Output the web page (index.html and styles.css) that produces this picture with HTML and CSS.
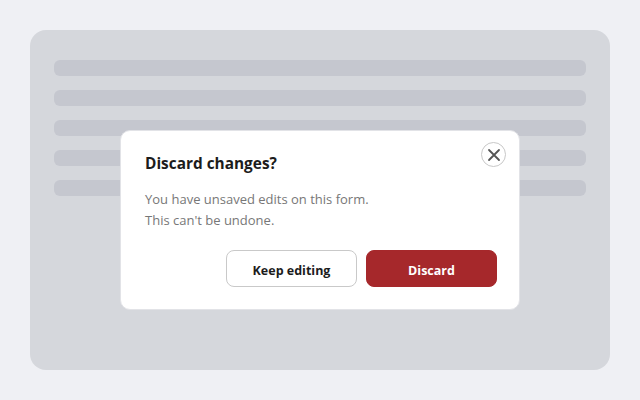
FILE: index.html
```html
<!DOCTYPE html>
<html>
<head>
<meta charset="utf-8">
<link rel="stylesheet" href="styles.css">
</head>
<body>
<div class="stage">
  <div class="panel">
    <div class="bar"></div>
    <div class="bar"></div>
    <div class="bar"></div>
    <div class="bar"></div>
    <div class="bar"></div>
  </div>
  <div class="dialog" role="dialog">
    <button class="close" aria-label="Close">
      <svg width="14" height="14" viewBox="0 0 14 14"><path d="M2 2L12 12M12 2L2 12" stroke="#555" stroke-width="1.8" stroke-linecap="round"/></svg>
    </button>
    <h2 class="title">Discard changes?</h2>
    <p class="body">You have unsaved edits on this form.<br>This can't be undone.</p>
    <div class="actions">
      <button class="btn btn-secondary">Keep editing</button>
      <button class="btn btn-danger">Discard</button>
    </div>
  </div>
</div>
</body>
</html>
```
FILE: styles.css
```css
html, body {
  margin: 0;
  padding: 0;
  background: #eff0f4;
  font-family: "Open Sans", "Noto Sans", sans-serif;
}
.stage {
  position: relative;
  width: 640px;
  height: 400px;
  padding: 30px;
  box-sizing: border-box;
}
.panel {
  height: 340px;
  background: #d5d7dc;
  border-radius: 16px;
  padding: 30px 24px;
  box-sizing: border-box;
  display: flex;
  flex-direction: column;
  gap: 14px;
}
.bar {
  height: 16px;
  background: #c5c7cf;
  border-radius: 6px;
}
.dialog {
  position: absolute;
  left: 120px;
  top: 130px;
  width: 400px;
  height: 180px;
  box-sizing: border-box;
  background: #fff;
  border-radius: 10px;
  border: 1px solid #e2e3e7;
  padding: 22px 22px 0 24px;
}
.close {
  position: absolute;
  top: 11px;
  right: 13px;
  width: 25px;
  height: 25px;
  border-radius: 50%;
  border: 1px solid #c8c8c8;
  background: #fff;
  padding: 0;
  display: flex;
  align-items: center;
  justify-content: center;
}
.title {
  margin: 0;
  font-size: 15.4px;
  font-weight: 700;
  color: #1c1c1c;
  line-height: 22px;
}
.body {
  margin: 14px 0 0;
  font-size: 13px;
  line-height: 21px;
  color: #777;
}
.actions {
  display: flex;
  justify-content: flex-end;
  gap: 9px;
  margin-top: 19px;
}
.btn {
  width: 131px;
  height: 37px;
  border-radius: 8px;
  font-family: inherit;
  font-size: 12.5px;
  font-weight: 700;
  padding: 3px 0 0;
}
.btn-secondary {
  background: #fff;
  border: 1px solid #c9c9c9;
  color: #1c1c1c;
}
.btn-danger {
  background: #a6282b;
  border: 1px solid #a6282b;
  color: #fff;
}
```
